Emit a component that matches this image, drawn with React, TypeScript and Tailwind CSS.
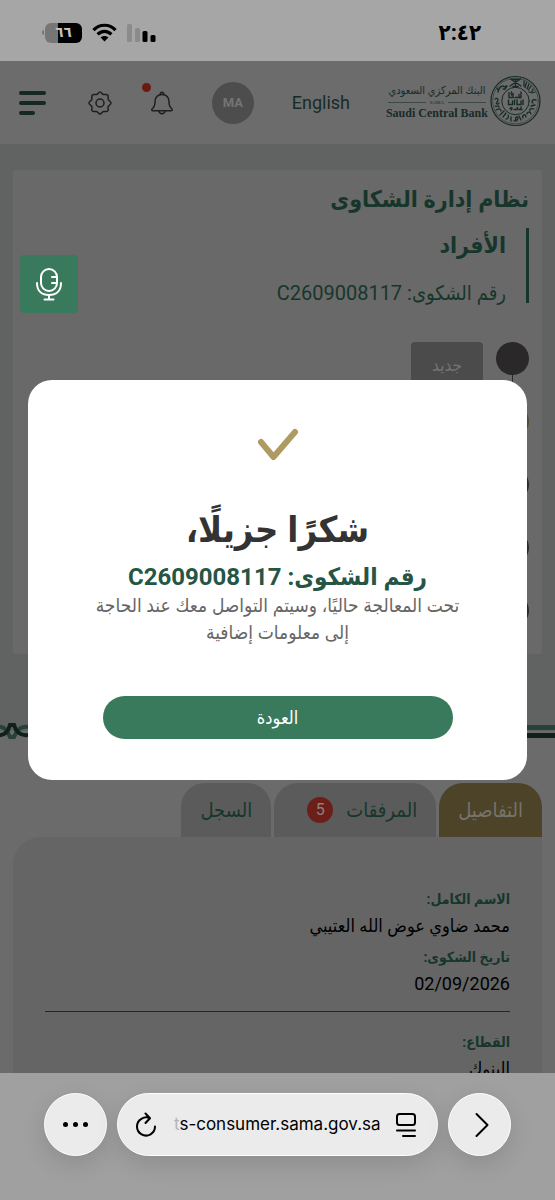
import type { ReactNode } from 'react';

type TStep = {
  label?: string;
  dot: string;
};

type TField = {
  label: string;
  value: string;
};

const steps: TStep[] = [
  { label: 'جديد', dot: 'bg-[#2b2829]' },
  { dot: 'bg-[#574a2e]' },
  { dot: 'bg-[#2b2829]' },
  { dot: 'bg-[#2b2829]' },
  { dot: 'bg-[#2b2829]' },
];

const fields: TField[] = [
  { label: 'الاسم الكامل:', value: 'محمد ضاوي عوض الله العتيبي' },
  { label: 'تاريخ الشكوى:', value: '02/09/2026' },
];

const StatusBar = () => (
  <div className="flex h-[61px] shrink-0 items-center justify-between bg-[#a6a6a6] pl-[42px] pr-[74px] pt-1">
    <div className="flex items-center gap-[10px]">
      <div className="flex items-center gap-px">
        <span className="h-[5px] w-[2px] rounded-l-full bg-[#767676]" />
        <div className="flex h-5 w-[37px] items-center justify-center rounded-[6px] bg-linear-to-r from-[#767676] from-34% to-black to-34% text-[15px] leading-none font-bold text-[#c0c0c0]">
          ٦٦
        </div>
      </div>
      <svg width="25" height="19" viewBox="0 0 25 19" fill="none" stroke="#000" strokeWidth="3.2">
        <path d="M1.5 7.2C7.6 .6 17.4 .6 23.5 7.2" />
        <path d="M5.6 11.4C9.6 7.3 15.4 7.3 19.4 11.4" />
        <path d="M12.5 18.5 8.6 14.6C10.8 12.6 14.2 12.6 16.4 14.6Z" fill="#000" stroke="none" />
      </svg>
      <svg width="29" height="19" viewBox="0 0 29 19">
        <rect x="0" y="1" width="5" height="18" rx="1.5" fill="#8b8b8b" />
        <rect x="8" y="5" width="5" height="14" rx="1.5" fill="#8b8b8b" />
        <rect x="15.5" y="8" width="5" height="11" rx="1.5" fill="#000" />
        <rect x="23.5" y="12" width="5" height="7" rx="1.5" fill="#000" />
      </svg>
    </div>
    <span className="text-[22px] font-bold text-black">٢:٤٢</span>
  </div>
);

const Emblem = () => (
  <svg className="shrink-0" width="51" height="52" viewBox="0 0 51 52" fill="none" stroke="#172b27" strokeLinecap="round">
    <circle cx="25.5" cy="26" r="24.5" strokeWidth="1.2" />
    <circle cx="25.5" cy="26" r="22.8" strokeWidth=".5" />
    <circle cx="25.5" cy="26" r="13.7" strokeWidth="1" />
    <g strokeWidth="1.3">
      <path d="M20.5 4C25 7 28 9 31 11M30.5 4C26 7 23 9 20 11" />
      <path d="M22.5 4.5h6M25.5 4v8M23 11.5h5" />
      <path d="M8 17c1-4 3-6 5-6 1 0 1 2 3 0M13 14c2 1 3-1 4-3M7 13l1 2" />
      <path d="M34 6v5M36.5 7.5 35 12.5M39 9l-2 5M41 11l-2.5 4M39 17c2 1 4-1 4-3M42 18l3-1" />
      <path d="M5 24c3-2 4 1 2 3s1 3 2 1M5 31c2 1 4-1 4 1M6 35c4-2 5-1 5 1M10 40l4-4M13 42l3-4M16 44c2 0 3-2 2-4" />
      <path d="M46 25c-4-1-5 2-3 3M45 30l-4 1M44 34c-3-1-5 0-4 2M41 39c-1-3-4-2-4 0M36 42c-1-4-4-2-3 1M31 45l-2-4M27 46c-2-1-2-4 0-4s1 4-3 4M21 46v-4" />
    </g>
    <g strokeWidth="1.4">
      <path d="M19 17.5v5h4v-4M25 22.5h4v-3M31 17v5.5h-3M21.5 17v3" />
      <path d="M18.5 25v4.500h4V26M24.5 25v4.500M27 25v4.500h4V26M33 25v4.500" />
      <path d="M20 33.5c2-2 3 0 1 1.5M24 34.5h3c1 0 1-2 0-2M29 34.5h3M31 32v2.500" />
    </g>
  </svg>
);

const BankLogo = () => (
  <a href="#home" dir="ltr" className="flex items-center gap-[4px] pb-1 text-[#172b27]">
    <div className="flex w-[98px] flex-col items-center whitespace-nowrap">
      <span dir="rtl" className="text-[11px] leading-[18px]">البنك المركزي السعودي</span>
      <div className="flex w-full items-center gap-1 font-['Liberation_Serif',serif] text-[5px] leading-[6px]">
        <span className="h-px flex-1 bg-[#3c4a47]" />
        SAMA
        <span className="h-px flex-1 bg-[#3c4a47]" />
      </div>
      <span className="font-['Liberation_Serif',serif] text-[12px] leading-[14px] font-bold">Saudi Central Bank</span>
    </div>
    <Emblem />
  </a>
);

const Header = () => (
  <header className="flex h-[83px] shrink-0 items-center justify-between bg-[#6c6c6c] pl-[19px] pr-[14px]">
    <button aria-label="القائمة" className="mr-1 flex w-[27px] flex-col gap-[6px]">
      <span className="h-1 w-full rounded-full bg-[#14291f]" />
      <span className="h-1 w-full rounded-full bg-[#14291f]" />
      <span className="h-1 w-4 rounded-full bg-[#14291f]" />
    </button>
    <button aria-label="الإعدادات">
      <svg width="24" height="24" viewBox="0 0 24 24" fill="none" stroke="#1d1f1f" strokeWidth="1.5" strokeLinejoin="round">
        <path d="M12 1C13.5 1 14 3.4 15.6 3.6 17.2 3.8 18.8 2.7 19.8 4.2 20.8 5.5 19.6 7 20.3 8.6 21 10 23 10.4 23 12 23 13.6 21 14 20.3 15.4 19.6 17 20.8 18.5 19.8 19.8 18.8 21.3 17.2 20.2 15.6 20.4 14 20.6 13.5 23 12 23 10.5 23 10 20.6 8.4 20.4 6.8 20.2 5.2 21.3 4.2 19.8 3.2 18.5 4.4 17 3.7 15.4 3 14 1 13.6 1 12 1 10.4 3 10 3.7 8.6 4.4 7 3.2 5.5 4.2 4.2 5.2 2.7 6.8 3.8 8.4 3.6 10 3.4 10.5 1 12 1Z" />
        <circle cx="12" cy="12" r="4" />
      </svg>
    </button>
    <button aria-label="الإشعارات" className="relative">
      <svg width="24" height="24" viewBox="0 0 24 24" fill="none" stroke="#1d1f1f" strokeWidth="1.5" strokeLinejoin="round">
        <path d="M12 3.5C7.5 3.5 5 6.8 5 10.5 5 15 4.3 16 2.5 17.5 1 19 2 19.8 3 19.8H21C22 19.8 23 19 21.5 17.5 19.7 16 19 15 19 10.5 19 6.8 16.5 3.5 12 3.5Z" />
        <path d="M10.3 3.5C10 .6 14 .6 13.7 3.5M9 20C9.5 23.6 14.5 23.6 15 20" />
      </svg>
      <span className="absolute -top-[8px] -left-[8px] size-[9px] rounded-full bg-[#6b1a12]" />
    </button>
    <div className="flex size-[42px] items-center justify-center rounded-full bg-[#4d4d4d] text-[13px] font-bold text-[#747474]">
      MA
    </div>
    <a href="#en" className="text-[18px] text-[#172b27]">
      English
    </a>
    <BankLogo />
  </header>
);

const ComplaintCard = () => (
  <section className="mx-[13px] mt-[26px] h-[484px] rounded-[2px] bg-[#696969] px-[13px] pt-3">
    <h1 className="text-[23px] leading-9 font-bold text-[#17362b]">نظام إدارة الشكاوى</h1>
    <div className="mt-[10px] flex h-[75px] flex-col justify-between border-r-[3px] border-[#17362b] pr-5 text-[#17362b]">
      <h2 className="text-[23px] leading-9 font-bold">الأفراد</h2>
      <p className="text-[20px] leading-5">رقم الشكوى: C2609008117</p>
    </div>
    <ol className="mt-[39px] flex flex-col">
      {steps.map((step, i) => (
        <li key={i} className="flex h-[63px] gap-[13px]">
          <div className="flex w-[33px] flex-col items-center">
            <span className={`size-[33px] shrink-0 rounded-full ${step.dot}`} />
            {i < steps.length - 1 && <span className="w-px flex-1 bg-[#2b2829]" />}
          </div>
          {step.label && (
            <span className="flex h-12 w-[72px] items-center justify-center rounded-[4px] bg-[#4b4b4b] text-[17px] text-[#737373]">
              {step.label}
            </span>
          )}
        </li>
      ))}
    </ol>
  </section>
);

const RopeDivider = () => (
  <div className="relative mt-[69px] flex h-4 items-center" dir="ltr">
    <svg className="shrink-0" width="28" height="18" viewBox="0 0 28 18" fill="none" strokeWidth="4">
      <path d="M-2 5C4 4 7 8 10 15H14C17 8 20 4 28 5" stroke="#274338" />
      <path d="M-2 13C4 14 8 10 10 3H14C16 10 20 14 28 13" stroke="#10211b" />
    </svg>
    <div className="flex flex-1 flex-col gap-[3px]">
      <span className="h-[5px] bg-[#274338]" />
      <span className="h-[5px] bg-[#10211b]" />
    </div>
  </div>
);

const Tab = ({ active, children }: { active?: boolean; children: ReactNode }) => (
  <button
    role="tab"
    aria-selected={!!active}
    className={`flex h-[54px] items-center gap-[13px] rounded-t-[24px] px-[19px] text-[20px] ${
      active ? 'bg-[#4d4329] text-[#77736a]' : 'bg-[#5b5b5b] text-[#17362b]'
    }`}
  >
    {children}
  </button>
);

const Details = () => (
  <section className="-mt-2 flex-1 bg-[#6b6b6b] px-[13px] pt-[52px]">
    <div role="tablist" className="flex gap-[3px]">
      <Tab active>التفاصيل</Tab>
      <Tab>
        المرفقات
        <span className="ml-[14px] flex size-[26px] items-center justify-center rounded-full bg-[#6b1f18] text-[16px] text-[#8f8080]">
          5
        </span>
      </Tab>
      <Tab>السجل</Tab>
    </div>
    <dl className="h-[400px] rounded-tl-[28px] bg-[#656565] px-8 pt-[48px]">
      {fields.map((field) => (
        <div key={field.label} className="mb-[4px]">
          <dt className="text-[14px] leading-[28px] font-bold text-[#17362b]">{field.label}</dt>
          <dd className="text-[18px] leading-[26px] text-black">{field.value}</dd>
        </div>
      ))}
      <div className="mt-[14px] border-t border-[#262626] pt-[16px]">
        <dt className="text-[14px] leading-[28px] font-bold text-[#17362b]">القطاع:</dt>
        <dd className="text-[18px] leading-[26px] text-black">البنوك</dd>
      </div>
    </dl>
  </section>
);

const ThanksDialog = () => (
  <div dir="rtl" className="absolute inset-0 flex items-center px-7 pt-[26px]">
    <div role="dialog" aria-modal="true" className="flex w-full flex-col items-center rounded-[24px] bg-white px-[48px] pt-[48px] pb-[41px] text-center">
      <svg width="42" height="34" viewBox="0 0 42 34" fill="none" stroke="#ae9b62" strokeWidth="6" strokeLinecap="round" strokeLinejoin="round">
        <path d="M4 14 16.5 29 38 4" />
      </svg>
      <h2 className="mt-[42px] text-[36px] leading-[52px] font-bold text-[#333]">شكرًا جزيلًا،</h2>
      <p className="mt-[6px] text-[24px] leading-[30px] font-bold text-[#255544]">رقم الشكوى: C2609008117</p>
      <p className="text-[19px] leading-[27px] text-[#666]">
        تحت المعالجة حاليًا، وسيتم التواصل معك عند الحاجة
        <br />
        إلى معلومات إضافية
      </p>
      <button className="mt-[50px] h-[43px] w-[350px] max-w-full rounded-full bg-[#3a7a5c] text-[18px] text-white">العودة</button>
    </div>
  </div>
);

const BrowserBar = () => (
  <nav className="flex h-[127px] shrink-0 items-start gap-[10px] bg-[#a0a0a0] px-[44px] pt-[20px] text-black">
    <button aria-label="المزيد" className="flex size-[63px] shrink-0 items-center justify-center gap-[5px] rounded-full border border-white bg-[#ebebeb] shadow-[0_8px_24px_rgba(0,0,0,0.12)]">
      <span className="size-[5px] rounded-full bg-black" />
      <span className="size-[5px] rounded-full bg-black" />
      <span className="size-[5px] rounded-full bg-black" />
    </button>
    <div className="flex h-[63px] min-w-0 flex-1 items-center rounded-full border border-white bg-[#ebebeb] pl-[17px] pr-[20px] shadow-[0_8px_24px_rgba(0,0,0,0.12)]">
      <button aria-label="إعادة التحميل">
        <svg width="22" height="26" viewBox="0 0 22 26" fill="none" stroke="#000" strokeWidth="2" strokeLinecap="round" strokeLinejoin="round">
          <path d="M14.5 5.9C12.5 5.2 9 5.2 6.4 6.8A9 9 0 1 0 20 14.5M10.5 1.500 15 6.200 10.500 11" />
        </svg>
      </button>
      <div className="ml-[17px] flex-1 overflow-hidden text-left font-[Inter,sans-serif] text-[17px] whitespace-nowrap">
        <span className="text-[#b5b5b5]">t</span>s-consumer.sama.gov.sa
      </div>
      <button aria-label="عرض القارئ">
        <svg width="22" height="26" viewBox="0 0 22 26" fill="none" stroke="#000" strokeWidth="2" strokeLinecap="round">
          <rect x="2" y="2" width="18" height="11" rx="2.5" />
          <path d="M2 18.5H20M8 24H20" />
        </svg>
      </button>
    </div>
    <button aria-label="التالي" className="flex size-[63px] shrink-0 items-center justify-center rounded-full border border-white bg-[#ebebeb] pl-1 shadow-[0_8px_24px_rgba(0,0,0,0.12)]">
      <svg width="14" height="26" viewBox="0 0 14 26" fill="none" stroke="#000" strokeWidth="2" strokeLinecap="round" strokeLinejoin="round">
        <path d="M1.5 2 12.5 13 1.5 24" />
      </svg>
    </button>
  </nav>
);

const App = () => {
  return (
    <div className="flex h-screen flex-col overflow-hidden bg-[#606362] font-[Roboto,'DejaVu_Sans_Condensed','DejaVu_Sans',sans-serif]">
      <StatusBar />
      <div className="relative flex min-h-0 flex-1 flex-col overflow-hidden">
        <Header />
        <main dir="rtl" className="flex min-h-0 flex-1 flex-col">
          <ComplaintCard />
          <RopeDivider />
          <Details />
        </main>
        <button aria-label="تسجيل صوتي" className="absolute top-[194px] left-5 flex size-[58px] items-center justify-center rounded-[4px] bg-[#3a7a5c]">
          <svg width="28" height="34" viewBox="0 0 28 34" fill="none" stroke="#fff" strokeWidth="2" strokeLinecap="round">
            <rect x="6" y="2" width="16" height="22" rx="8" />
            <path d="M2 16C2 24 7 28 14 28S26 24 26 16M14 28V32.5M9.5 32.5H18.5M17 10H21M17 16H21" />
          </svg>
        </button>
        <ThanksDialog />
      </div>
      <BrowserBar />
    </div>
  );
};

export default App;
